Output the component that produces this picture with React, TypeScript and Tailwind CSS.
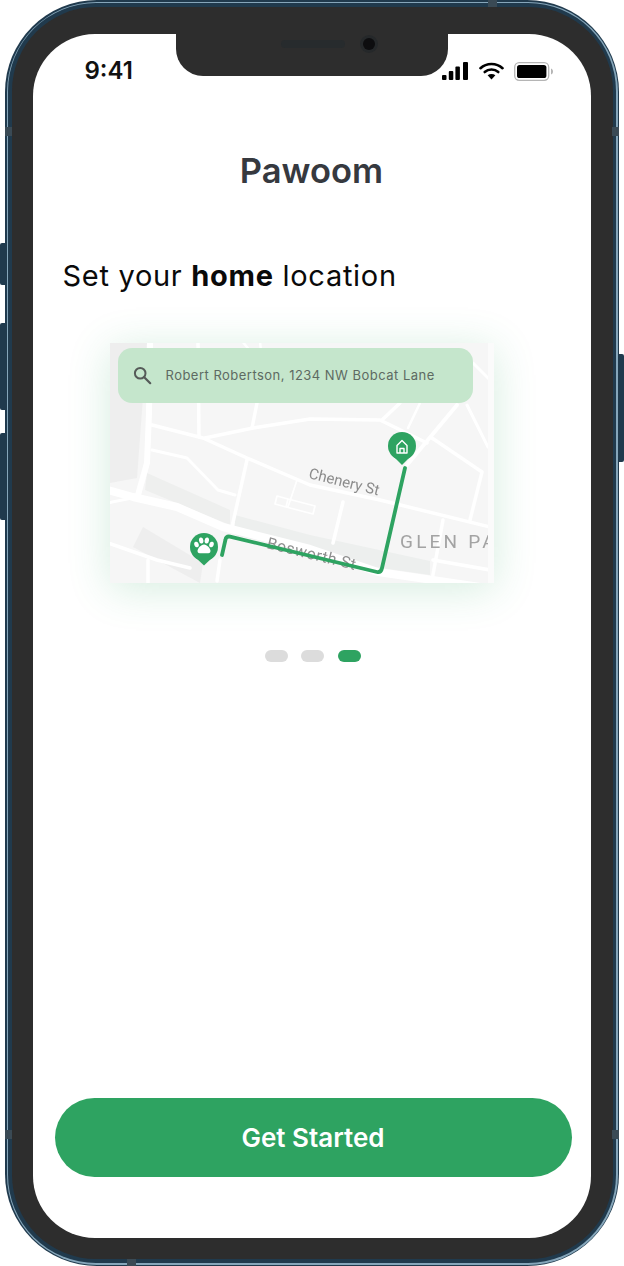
const font = "font-['Inter',sans-serif]";

function SignalIcon() {
  return (
    <svg width="27" height="18" viewBox="0 0 27 18" className="shrink-0">
      <rect x="0" y="13" width="4.5" height="5" rx="1" fill="#000" />
      <rect x="6.8" y="9" width="4.5" height="9" rx="1" fill="#000" />
      <rect x="13.4" y="4.5" width="4.5" height="13.5" rx="1" fill="#000" />
      <rect x="21" y="0" width="5" height="18" rx="1" fill="#000" />
    </svg>
  );
}

function WifiIcon() {
  return (
    <svg width="25" height="18" viewBox="0 0 25 18" className="shrink-0">
      <path d="M1.5 6.2 C7.5 0.6 17.5 0.6 23.5 6.2" fill="none" stroke="#000" strokeWidth="2.6" strokeLinecap="round" />
      <path d="M5.7 10 C9.5 6.6 15.5 6.6 19.3 10" fill="none" stroke="#000" strokeWidth="2.6" strokeLinecap="round" />
      <path d="M8.6 13.2 C10.8 11.6 14.2 11.6 16.4 13.2 L12.5 17.5 Z" fill="#000" />
    </svg>
  );
}

function BatteryIcon() {
  return (
    <svg width="40" height="19" viewBox="0 0 40 19" className="shrink-0">
      <rect x="0.7" y="0.7" width="34" height="17.6" rx="4.5" fill="#fff" stroke="#b5b5b5" strokeWidth="1.3" />
      <rect x="3" y="3" width="29.4" height="13" rx="2.6" fill="#000" />
      <path d="M37 6.5 C38.4 7 39 8 39 9.5 C39 11 38.4 12 37 12.5 Z" fill="#b5b5b5" />
    </svg>
  );
}

function SearchIcon() {
  return (
    <svg width="19" height="19" viewBox="0 0 19 19" className="shrink-0">
      <circle cx="7.2" cy="7.2" r="5.3" fill="none" stroke="#555a58" strokeWidth="2" />
      <path d="M11.2 11.2 L17.2 17.2" stroke="#555a58" strokeWidth="2.2" strokeLinecap="round" />
    </svg>
  );
}

function MapDrawing() {
  const g = "#2ea361";
  return (
    <svg width="378" height="240" viewBox="0 0 378 240" className="block blur-[0.5px]">
      <rect width="378" height="240" fill="#f6f6f6" />
      <path d="M0 0 L37 0 L27 135 L0 140 Z" fill="#eeeeee" />
      <path d="M37 130 L120 167 L120 182 L35 147 Z" fill="#eeefee" />
      <path d="M125 172 L200 192 L320 218 L320 232 L250 222 L125 192 Z" fill="#edefee" />
      <path d="M33 184 L93 220 L90 240 L23 204 Z" fill="#eeeeee" />
      <g fill="none" stroke="#ffffff" strokeLinecap="round" strokeLinejoin="round">
        <path d="M40 -2 L39 70 L37 120 L28 152" strokeWidth="6" />
        <path d="M-2 147 L23 154 L67 164 L113 184 L200 206 L268 229 L384 246" strokeWidth="8" />
        <path d="M42 82 L93 95 L137 115 L200 142 L270 157 L380 184" strokeWidth="3.5" />
        <path d="M95 95 L143 85 L200 76 L270 77 L317 100" strokeWidth="3.5" />
        <path d="M42 107 L77 115 L108 147 L125 152" strokeWidth="3" />
        <path d="M137 117 L122 184" strokeWidth="3.5" />
        <path d="M88 -2 L89 94" strokeWidth="3.5" />
        <path d="M147 60 L142 85" strokeWidth="3.5" />
        <path d="M132 -2 L150 20 M150 -2 L152 20" strokeWidth="2.5" />
        <path d="M-2 200 L47 217 L80 225" strokeWidth="3.5" />
        <path d="M38 217 L38 242" strokeWidth="3.5" />
        <path d="M22 155 L-2 160" strokeWidth="3" />
        <path d="M110 217 L107 238" strokeWidth="3.5" />
        <path d="M297 122 L347 62" strokeWidth="4" />
        <path d="M272 77 L290 60" strokeWidth="3.5" />
        <path d="M322 95 L372 129 L360 177" strokeWidth="3.5" />
        <path d="M357 62 L378 104" strokeWidth="3" />
        <path d="M363 20 L380 37" strokeWidth="3" />
        <path d="M333 177 L322 237" strokeWidth="3.5" />
        <path d="M233 159 L223 200" strokeWidth="3.5" />
        <path d="M323 217 L380 227" strokeWidth="3.5" />
        <path d="M310 60 L298 85" strokeWidth="2.5" />
        <path d="M167 153 L178 156 L176 164 L165 161 Z M178 156 L205 163 L203 171 L176 164 M187 137 L178 164" strokeWidth="1.7" />
      </g>
      <text x="0" y="0" transform="translate(198 135) rotate(14)" fontFamily="Roboto, sans-serif" fontSize="15" fill="#8b8b8b">Chenery St</text>
      <text x="0" y="0" transform="translate(156 205) rotate(14)" fontFamily="Roboto, sans-serif" fontSize="16" letterSpacing="0.4" fill="#8f8f8f">Bosworth St</text>
      <text x="290" y="205" fontFamily="Roboto, sans-serif" fontSize="19" letterSpacing="3.2" fill="#a3a3a3">GLEN PA</text>
      <path d="M112 212 L115.5 196.5 Q116.2 193 120 193.6 L267 229 Q271 229.8 272 225 L295 125" fill="none" stroke={g} strokeWidth="3.8" strokeLinecap="round" strokeLinejoin="round" />
      <circle cx="94" cy="204" r="14" fill={g} />
      <path d="M84 213 L94 222.5 L104 213 Z" fill={g} />
      <g fill="#fff">
        <ellipse cx="86.5" cy="201.5" rx="2.2" ry="2.8" transform="rotate(-20 86.5 201.5)" />
        <ellipse cx="91.2" cy="197.5" rx="2.2" ry="3" transform="rotate(-8 91.2 197.5)" />
        <ellipse cx="96.8" cy="197.5" rx="2.2" ry="3" transform="rotate(8 96.8 197.5)" />
        <ellipse cx="101.5" cy="201.5" rx="2.2" ry="2.8" transform="rotate(20 101.5 201.5)" />
        <path d="M94 201.5 C97 201.5 100.5 205.5 100.5 208 C100.5 211 97 210.3 94 210.3 C91 210.3 87.5 211 87.5 208 C87.5 205.5 91 201.5 94 201.5 Z" />
      </g>
      <circle cx="292" cy="103" r="14" fill={g} />
      <path d="M282 112 L292 122 L302 112 Z" fill={g} />
      <path d="M287 110 L287 102.5 L292 97.5 L297 102.5 L297 110 Z M290 110 L290 105.5 L294 105.5 L294 110" fill="none" stroke="#fff" strokeWidth="1.4" strokeLinejoin="round" />
    </svg>
  );
}

export default function App() {
  return (
    <div className={`relative h-[1266px] w-[624px] overflow-hidden bg-white ${font}`}>
      <div className="absolute left-0 top-[243px] h-[42px] w-[6px] rounded-l-[2px] bg-[#203a4d]" />
      <div className="absolute left-0 top-[323px] h-[87px] w-[6px] rounded-l-[2px] bg-[#203a4d]" />
      <div className="absolute left-0 top-[433px] h-[87px] w-[6px] rounded-l-[2px] bg-[#203a4d]" />
      <div className="absolute left-[618px] top-[354px] h-[108px] w-[6px] rounded-r-[2px] bg-[#203a4d]" />

      <div className="ml-[5px] h-[1266px] w-[614px] rounded-[92px] bg-[#203a4d] p-[1.5px]">
        <div className="h-full rounded-[90px] bg-[#86a6ba] p-[1.5px]">
          <div className="h-full rounded-[88px] bg-[#203a4d] px-[3.5px] pb-[4.5px] pt-[3.5px]">
            <div className="h-full rounded-[84px] bg-[#2d2d2d] pb-[21px] pl-[21px] pr-[22px] pt-[27px]">
              <div className="flex h-full flex-col rounded-[62px] bg-white">
                <div className="flex h-[52px] items-end justify-between pb-[2px] pl-[52px] pr-[37px]">
                  <span className="text-[24px] font-semibold leading-[26px] text-[#111]">9:41</span>
                  <div className="mb-[3px] flex items-center gap-[10px]">
                    <SignalIcon />
                    <WifiIcon />
                    <BatteryIcon />
                  </div>
                </div>
                <h1 className="mt-[64px] text-center text-[34.5px] font-semibold leading-[42px] text-[#36393f]">Pawoom</h1>
                <h2 className="mt-[64px] pl-[30px] text-[29px] font-normal leading-[40px] tracking-[0.7px] text-[#0a0a0a]">
                  Set your <b className="font-bold">home</b> location
                </h2>
                <div className="relative ml-[77px] mt-[47px] h-[240px] w-[384px] bg-[#fbfbfb] shadow-[0_6px_40px_rgba(46,163,97,0.2)]">
                  <MapDrawing />
                  <div className="absolute left-[8px] top-[5px] flex h-[55px] w-[355px] items-center gap-[14px] rounded-[14px] bg-[#c5e6cc] pl-[15px]">
                    <SearchIcon />
                    <span className="text-[13px] leading-none tracking-[0.48px] text-[#5d6a62]">Robert Robertson, 1234 NW Bobcat Lane</span>
                  </div>
                </div>
                <div className="mt-[67px] flex gap-[13px] pl-[232px]">
                  <span className="h-[12px] w-[23px] rounded-full bg-[#dcdcdc]" />
                  <span className="h-[12px] w-[23px] rounded-full bg-[#dcdcdc]" />
                  <span className="ml-[1px] h-[12px] w-[23px] rounded-full bg-[#2ea361]" />
                </div>
                <div className="flex-1" />
                <button className="mb-[61px] ml-[22px] h-[79px] w-[517px] rounded-full bg-[#2ea361] text-[26px] font-semibold text-white">
                  Get Started
                </button>
              </div>
            </div>
          </div>
        </div>
      </div>

      {/* notch */}
      <div className="absolute left-[176px] top-[30px] flex h-[46px] w-[272px] items-center rounded-b-[27px] bg-[#2d2d2d]">
        <span className="ml-[105px] mt-[-18px] h-[8px] w-[64px] rounded-full bg-[#272b2d]" />
        <span className="ml-[15px] mt-[-18px] flex h-[18px] w-[18px] items-center justify-center rounded-full bg-[#25282a]">
          <span className="h-[12px] w-[12px] rounded-full bg-[#0d0d0f]" />
        </span>
      </div>

      {/* antenna bands */}
      <div className="absolute left-[5px] top-[127px] h-[9px] w-[7px] bg-[#3a4a55]" />
      <div className="absolute left-[612px] top-[127px] h-[9px] w-[7px] bg-[#3a4a55]" />
      <div className="absolute left-[488px] top-0 h-[7px] w-[9px] bg-[#3a4a55]" />
      <div className="absolute left-[127px] top-[1259px] h-[7px] w-[9px] bg-[#3a4a55]" />
      <div className="absolute left-[5px] top-[1130px] h-[9px] w-[7px] bg-[#3a4a55]" />
      <div className="absolute left-[612px] top-[1130px] h-[9px] w-[7px] bg-[#3a4a55]" />
    </div>
  );
}
